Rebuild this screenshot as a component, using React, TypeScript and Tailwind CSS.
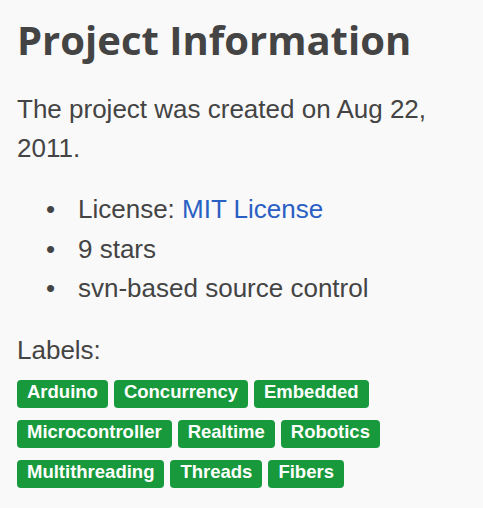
import React from "react";

const labels = [
  ["Arduino", "Concurrency", "Embedded"],
  ["Microcontroller", "Realtime", "Robotics"],
  ["Multithreading", "Threads", "Fibers"],
];

export default function App() {
  return (
    <div className="min-h-[508px] w-[483px] bg-[#f9f9f9] pl-[17px] pt-[16px] text-[#444444]" style={{ fontFamily: '"Liberation Sans", Arial, sans-serif' }}>
      <h1 className="m-0 text-[40px] font-bold leading-[47px] text-[#444444]" style={{ fontFamily: '"Open Sans", sans-serif' }}>
        Project Information
      </h1>
      <p className="mt-[27px] w-[440px] text-[26px] leading-[39px]">
        The project was created on Aug 22, 2011.
      </p>
      <ul className="mt-[22px] text-[26px] leading-[39.5px]">
        <li className="flex">
          <span className="w-[61px] pl-[29px]">•</span>
          <span>
            License: <a className="text-[#2a5fc4]">MIT License</a>
          </span>
        </li>
        <li className="flex">
          <span className="w-[61px] pl-[29px]">•</span>
          <span>9 stars</span>
        </li>
        <li className="flex">
          <span className="w-[61px] pl-[29px]">•</span>
          <span>svn-based source control</span>
        </li>
      </ul>
      <div className="mt-[22px] text-[26px] leading-[39px]">Labels:</div>
      <div className="mt-[10px] flex flex-col gap-[12px]">
        {labels.map((row, i) => (
          <div key={i} className="flex gap-[6px]">
            {row.map((l) => (
              <span
                key={l}
                className="flex h-[28px] items-center rounded-[4px] bg-[#17993c] px-[10px] pb-[3px] text-[18.5px] font-bold leading-none text-white"
              >
                {l}
              </span>
            ))}
          </div>
        ))}
      </div>
    </div>
  );
}
